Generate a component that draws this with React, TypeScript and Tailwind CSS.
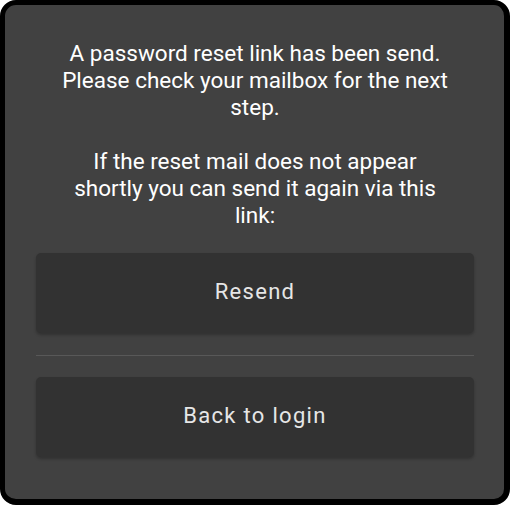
export default function App() {
  return (
    <div className="w-[510px] h-[505px] bg-white" style={{ fontFamily: "Roboto, 'Noto Sans', sans-serif" }}>
      <div className="w-full h-full rounded-[16px] border-l-[5px] border-t-[5px] border-r-[6px] border-b-[6px] border-black bg-[#414141] pt-[35px] pl-[31px] pr-[30px] flex flex-col">
        <div className="w-[394px] mx-auto text-center text-white text-[22.5px] leading-[27px]">
          <p>A password reset link has been send. Please check your mailbox for the next step.</p>
          <p className="mt-[27px]">If the reset mail does not appear shortly you can send it again via this link:</p>
        </div>
        <button className="mt-[24px] h-[80px] w-full shrink-0 rounded-[5px] bg-[#323232] pb-[4px] text-[#e6e6e6] text-[22px] tracking-[1.3px] shadow-[0_2px_3px_rgba(0,0,0,0.25)]">
          Resend
        </button>
        <div className="mt-[22px] h-px w-full shrink-0 bg-[#585858]" />
        <button className="mt-[21px] h-[80px] w-full shrink-0 rounded-[5px] bg-[#323232] pb-[4px] text-[#e6e6e6] text-[22px] tracking-[1.3px] shadow-[0_2px_3px_rgba(0,0,0,0.25)]">
          Back to login
        </button>
      </div>
    </div>
  );
}
